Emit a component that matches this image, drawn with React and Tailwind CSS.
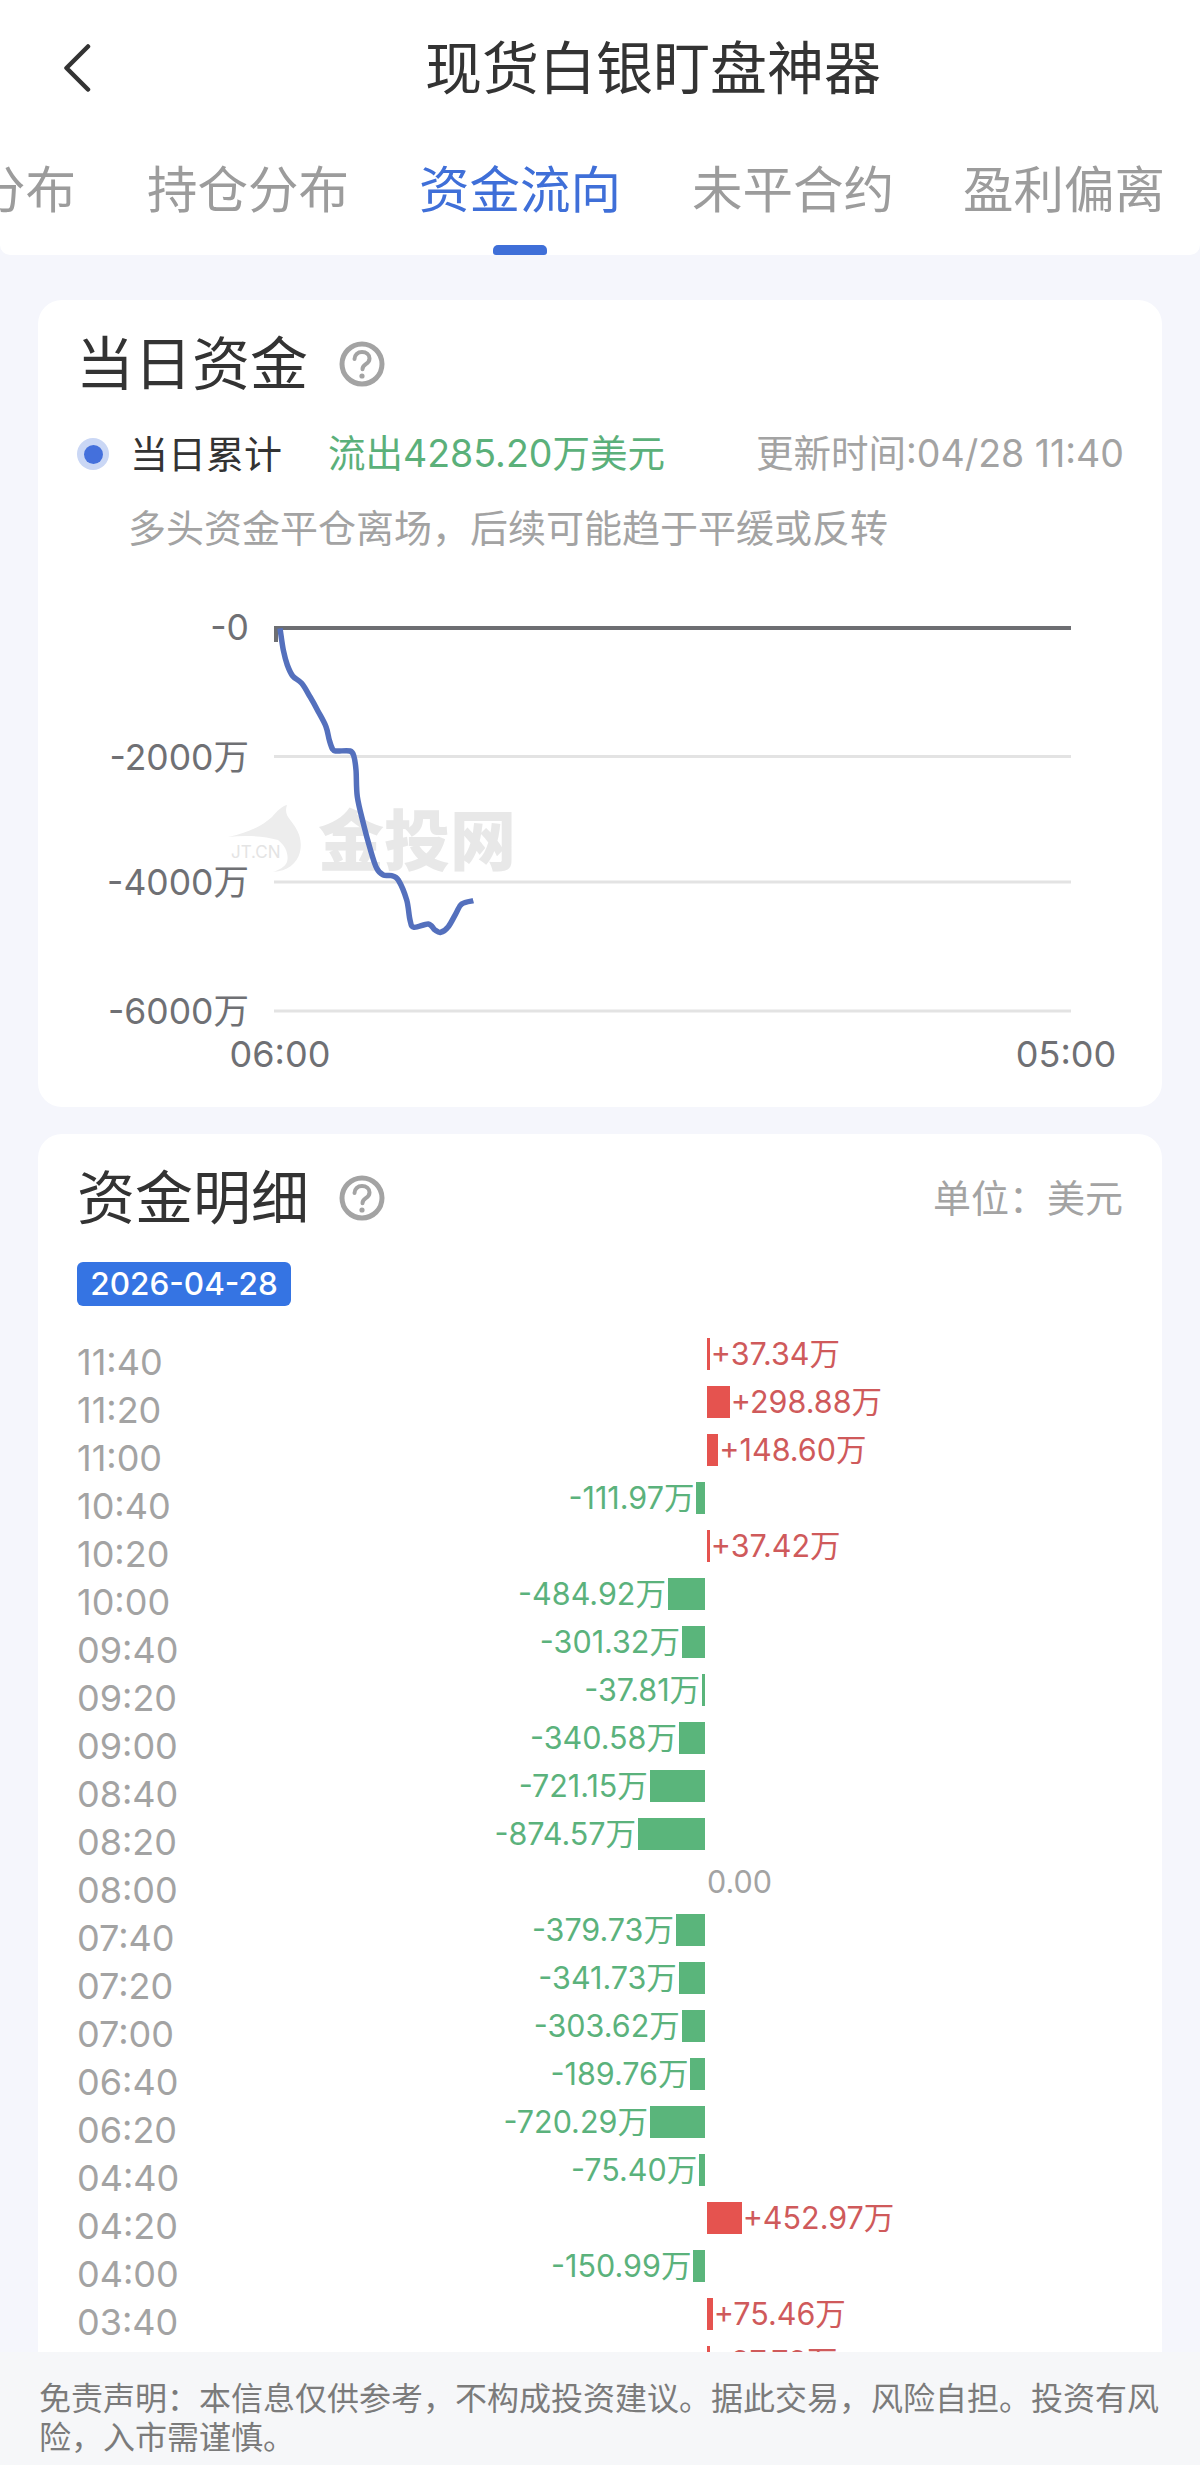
const FONT = "font-['Inter','Noto_Sans_CJK_SC',sans-serif]";

const rows = [
  ['11:40', 37.34], ['11:20', 298.88], ['11:00', 148.6], ['10:40', -111.97], ['10:20', 37.42],
  ['10:00', -484.92], ['09:40', -301.32], ['09:20', -37.81], ['09:00', -340.58], ['08:40', -721.15],
  ['08:20', -874.57], ['08:00', 0], ['07:40', -379.73], ['07:20', -341.73], ['07:00', -303.62],
  ['06:40', -189.76], ['06:20', -720.29], ['04:40', -75.4], ['04:20', 452.97], ['04:00', -150.99],
  ['03:40', 75.46], ['03:20', 37.73],
];

const curve = [
  [240,85],[250,150],[262,195],[278,228],[305,250],[330,290],[355,335],[378,380],[388,420],[398,448],[410,453],
  [450,453],[462,470],[468,510],[472,590],[490,670],[510,745],[530,805],[550,825],[575,827],[595,840],[620,900],
  [630,960],[642,982],[685,972],[705,990],[722,997],[745,980],[768,940],[785,912],[820,902],
].map(([x, y]) => [x / 3 + 200 - 38, y / 3]);

function smooth(p) {
  let d = `M${p[0][0]} ${p[0][1]}`;
  for (let i = 0; i < p.length - 1; i++) {
    const a = p[i - 1] || p[i], b = p[i], c = p[i + 1], e = p[i + 2] || c;
    const c1 = [b[0] + (c[0] - a[0]) / 6, b[1] + (c[1] - a[1]) / 6];
    const c2 = [c[0] - (e[0] - b[0]) / 6, c[1] - (e[1] - b[1]) / 6];
    d += ` C${c1[0].toFixed(1)} ${c1[1].toFixed(1)} ${c2[0].toFixed(1)} ${c2[1].toFixed(1)} ${c[0].toFixed(1)} ${c[1].toFixed(1)}`;
  }
  return d;
}

function Help() {
  return (
    <svg width="46" height="46" viewBox="0 0 46 46" fill="none" className="shrink-0">
      <circle cx="23" cy="23" r="20" stroke="#a3a3a3" strokeWidth="5" />
      <path d="M15.500 18c0-4.200 3.300-7 7.500-7s7.500 2.700 7.500 6.500c0 2.900-1.700 4.300-3.700 5.700-2 1.400-3.300 2.500-3.300 5" stroke="#a3a3a3" strokeWidth="4" strokeLinecap="round" />
      <circle cx="23" cy="35" r="2.600" fill="#a3a3a3" />
    </svg>
  );
}

function Chart() {
  const lines = [
    { y: 28, label: '-0', c: '#6d6e72', w: 4, ty: 40 },
    { y: 156.5, label: '-2000万', c: '#e3e3e3', w: 3, ty: 170 },
    { y: 282, label: '-4000万', c: '#e3e3e3', w: 3, ty: 295 },
    { y: 411, label: '-6000万', c: '#e3e3e3', w: 3, ty: 424 },
  ];
  return (
    <svg width="1124" height="507" viewBox="0 0 1124 507" className="block">
      <path d="M249 205c-5 1-10 6-15 12-11 10-26 16-44 20 18-2 36-1 50 3 8 6 11 15 9 22-2 5-8 8-14 10 14-1 24-8 27-20 3-14-3-23-9-31-5-6-6-10-4-16z" fill="#ededed" />
      <text x="280" y="265" fontSize="66" fontWeight="900" fill="#e8e8e8" fontFamily="'Noto Sans CJK SC',sans-serif">金投网</text>
      <text x="193" y="258" fontSize="17" fill="#e4e4e4" fontFamily="Inter,sans-serif">JT.CN</text>
      {lines.map((l) => (
        <g key={l.label}>
          <line x1="236" x2="1033" y1={l.y} y2={l.y} stroke={l.c} strokeWidth={l.w} />
          <text x="211" y={l.ty} textAnchor="end" fontSize="35.500" fill="#6f7074" fontFamily="Inter,'Noto Sans CJK SC',sans-serif">{l.label}</text>
        </g>
      ))}
      <line x1="238" x2="238" y1="28" y2="42" stroke="#6d6e72" strokeWidth="4" />
      <path d={smooth(curve)} fill="none" stroke="#5470bd" strokeWidth="5.500" />
      <text x="242" y="467" textAnchor="middle" fontSize="36" fill="#6f7074" fontFamily="Inter,sans-serif">06:00</text>
      <text x="1028" y="467" textAnchor="middle" fontSize="36" fill="#6f7074" fontFamily="Inter,sans-serif">05:00</text>
    </svg>
  );
}

function Row({ time, v }) {
  const w = Math.max(Math.abs(v) * 0.0765, 2);
  const text = v > 0 ? `+${v.toFixed(2)}万` : v < 0 ? `-${Math.abs(v).toFixed(2)}万` : '0.00';
  return (
    <div className="flex h-12 shrink-0 items-center">
      <div className="w-[201px] shrink-0 pt-4 text-[36px] leading-[32px] text-[#a3a3a3]">{time}</div>
      <div className="flex h-8 w-[427px] shrink-0 items-center justify-end">
        {v < 0 && (
          <>
            <span className="mr-[2px] text-[30.5px] leading-8 whitespace-nowrap text-[#5bb27c]">{text}</span>
            <span className="h-8 bg-[#5ab57b]" style={{ width: w }} />
          </>
        )}
      </div>
      <div className="ml-[2px] flex h-8 items-center">
        {v > 0 && (
          <>
            <span className="h-8 bg-[#e5534f]" style={{ width: w }} />
            <span className="ml-px text-[30.5px] leading-8 whitespace-nowrap text-[#cf5a5b]">{text}</span>
          </>
        )}
        {v === 0 && <span className="text-[30.5px] leading-8 text-[#a3a3a3]">{text}</span>}
      </div>
    </div>
  );
}

export default function App() {
  return (
    <div className={`${FONT} flex h-[2465px] w-[1200px] flex-col overflow-hidden bg-[#f5f6fc]`}>
      <header className="h-[255px] shrink-0 overflow-hidden rounded-b-[10px] bg-white">
        <div className="flex h-[136px] items-center pl-[63px]">
          <svg width="28" height="48" viewBox="0 0 28 48" fill="none">
            <path d="M25 2.500 3.500 24 25 45.500" stroke="#333" strokeWidth="4.500" strokeLinecap="round" strokeLinejoin="round" />
          </svg>
          <h1 className="ml-[334px] text-[57px] leading-none font-normal whitespace-nowrap text-[#333]">现货白银盯盘神器</h1>
        </div>
        <nav className="flex h-[109px] items-start pt-[27px] text-[50.5px] leading-[54px] whitespace-nowrap text-[#9c9c9c]">
          <span className="-ml-[26px] w-[102px] shrink-0 text-right">分布</span>
          <span className="ml-[71px] w-[202px] shrink-0">持仓分布</span>
          <span className="ml-[70px] w-[202px] shrink-0 text-[#3f6fd8]">资金流向</span>
          <span className="ml-[71px] w-[202px] shrink-0">未平合约</span>
          <span className="ml-[69px] w-[202px] shrink-0">盈利偏离</span>
        </nav>
        <div className="ml-[493px] h-[10px] w-[54px] rounded-t-[5px] rounded-b-[3px] bg-[#3f6fd8]" />
      </header>

      <main className="flex min-h-0 flex-1 flex-col overflow-hidden px-[38px] pt-[45px]">
        <section className="h-[807px] shrink-0 rounded-3xl bg-white">
          <div className="flex h-[128px] items-center pl-[38px]">
            <h2 className="text-[58px] leading-none font-normal text-[#333]">当日资金</h2>
            <span className="ml-[31px]"><Help /></span>
          </div>
          <div className="flex h-[52px] items-center pr-[38px] pl-[39px] text-[38px] leading-none whitespace-nowrap">
            <span className="flex h-8 w-8 items-center justify-center rounded-full bg-[#cad7f5]">
              <span className="h-[19px] w-[19px] rounded-full bg-[#4470dc]" />
            </span>
            <span className="ml-[21px] text-[#333]">当日累计</span>
            <span className="ml-[46px] text-[37.5px] text-[#5bb07a]">流出4285.20万美元</span>
            <span className="ml-auto text-[37.5px] text-[#a3a3a3]">更新时间:04/28 11:40</span>
          </div>
          <p className="mt-[22px] pl-[90px] text-[38px] leading-[52px] whitespace-nowrap text-[#a3a3a3]">多头资金平仓离场，后续可能趋于平缓或反转</p>
          <div className="mt-[46px]"><Chart /></div>
        </section>

        <section className="mt-[27px] min-h-[1400px] shrink-0 rounded-t-3xl bg-white pl-[39px]">
          <div className="flex h-[128px] items-center pr-[39px]">
            <h2 className="text-[58px] leading-none font-normal text-[#333]">资金明细</h2>
            <span className="ml-[30px]"><Help /></span>
            <span className="ml-auto text-[38px] leading-none text-[#a3a3a3]">单位：美元</span>
          </div>
          <div className="flex h-[44px] w-[214px] items-center justify-center rounded-md bg-[#3574e3] text-[31.5px] leading-none font-medium text-white">2026-04-28</div>
          <div className="mt-[24px] flex flex-col">
            {rows.map(([t, v]) => <Row key={t} time={t} v={v} />)}
          </div>
        </section>
      </main>

      <footer className="h-[113px] shrink-0 bg-[#f6f7f9] pt-[27px] pr-[41px] pl-[39px] text-[32px] leading-[39px] text-[#7b7b7b]">
        免责声明：本信息仅供参考，不构成投资建议。据此交易，风险自担。投资有风险，入市需谨慎。
      </footer>
    </div>
  );
}
